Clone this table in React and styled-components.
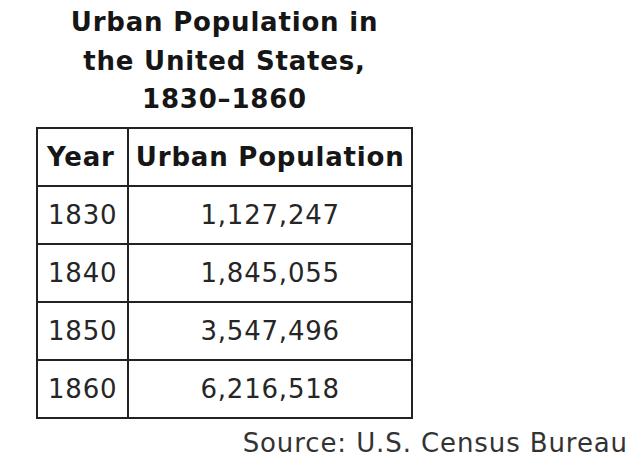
import React from "react";
import styled, { createGlobalStyle } from "styled-components";

const Global = createGlobalStyle`
  html, body { margin: 0; padding: 0; background: #ffffff; }
  body { font-family: "DejaVu Sans", Verdana, sans-serif; }
`;

const Figure = styled.div`
  display: flex;
  flex-direction: column;
  width: 592px;
  padding: 3px 0 0 36px;
`;

const Title = styled.h1`
  width: 377px;
  margin: 0 0 8px 0;
  text-align: center;
  font-size: 26px;
  line-height: 38.5px;
  letter-spacing: 0.8px;
  font-weight: bold;
  color: #161616;
`;

const Table = styled.table`
  width: 377px;
  border-collapse: collapse;
  border: 2px solid #222;
`;

const HeadCell = styled.th`
  height: 56px;
  padding: ${(p) => (p.$first ? "0 0 0 9px" : "0 2px")};
  border: 2px solid #222;
  font-size: 26px;
  letter-spacing: 0.8px;
  font-weight: bold;
  color: #161616;
  text-align: ${(p) => (p.$first ? "left" : "center")};
  white-space: nowrap;
`;

const Cell = styled.td`
  height: 56px;
  padding: 0 ${(p) => (p.$year ? "10px" : "4px")};
  border: 2px solid #222;
  font-size: 26px;
  letter-spacing: 0.8px;
  color: #262626;
  text-align: ${(p) => (p.$year ? "left" : "center")};
  width: ${(p) => (p.$year ? "68px" : "auto")};
`;

const Source = styled.div`
  margin-top: 8px;
  text-align: right;
  font-size: 26px;
  line-height: 32px;
  letter-spacing: 0.9px;
  color: #333;
`;

const rows = [
  ["1830", "1,127,247"],
  ["1840", "1,845,055"],
  ["1850", "3,547,496"],
  ["1860", "6,216,518"],
];

export default function App() {
  return (
    <>
      <Global />
      <Figure>
        <Title>
          Urban Population in
          <br />
          the United States,
          <br />
          1830–1860
        </Title>
        <Table>
          <thead>
            <tr>
              <HeadCell $first>Year</HeadCell>
              <HeadCell>Urban Population</HeadCell>
            </tr>
          </thead>
          <tbody>
            {rows.map(([y, p]) => (
              <tr key={y}>
                <Cell $year>{y}</Cell>
                <Cell>{p}</Cell>
              </tr>
            ))}
          </tbody>
        </Table>
        <Source>Source: U.S. Census Bureau</Source>
      </Figure>
    </>
  );
}
